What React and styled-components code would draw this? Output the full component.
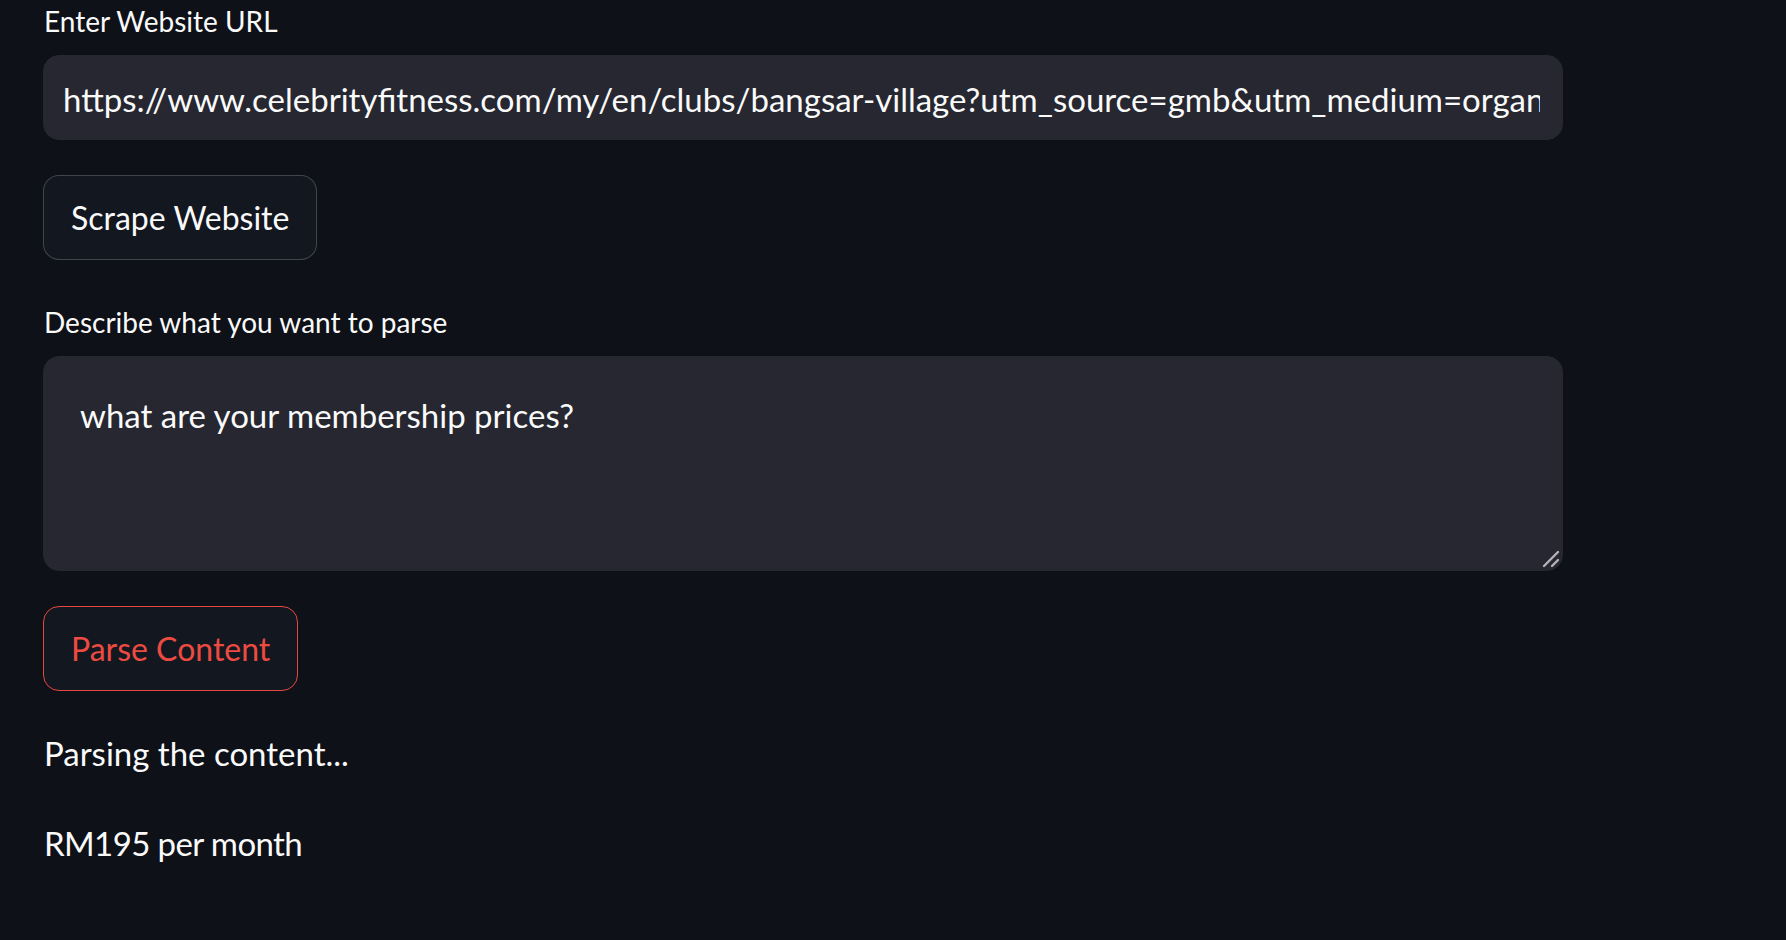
import React from "react";
import styled, { createGlobalStyle } from "styled-components";

const GlobalStyle = createGlobalStyle`
    html, body {
        margin: 0;
        padding: 0;
        background: #0e1117;
    }
    body {
        font-family: "Lato", "Noto Sans", sans-serif;
        color: #fafafa;
    }
    * {
        box-sizing: border-box;
    }
`;

const URL_VALUE =
    "https://www.celebrityfitness.com/my/en/clubs/bangsar-village?utm_source=gmb&utm_medium=organic&utm_campaign=local";

export default function App() {
    return (
        <Page>
            <GlobalStyle />
            <Main>
                <Label htmlFor="url">Enter Website URL</Label>
                <TextInput id="url" type="text" defaultValue={URL_VALUE} />
                <Button>Scrape Website</Button>
                <Label htmlFor="desc" $gap={42}>
                    Describe what you want to parse
                </Label>
                <AreaWrap>
                    <TextArea id="desc" defaultValue="what are your membership prices?" />
                    <ResizeHandle viewBox="0 0 20 20" aria-hidden="true">
                        <line x1="3" y1="17" x2="17" y2="3" />
                        <line x1="11" y1="17" x2="17" y2="11" />
                    </ResizeHandle>
                </AreaWrap>
                <Button $primary>Parse Content</Button>
                <Message $gap={36}>Parsing the content...</Message>
                <Message $gap={37} $tight>
                    RM195 per month
                </Message>
            </Main>
        </Page>
    );
}

const Page = styled.div`
    min-height: 940px;
    padding: 1px 0 0 43px;
`;

const Main = styled.div`
    width: 1520px;
    display: flex;
    flex-direction: column;
    align-items: flex-start;
`;

const Label = styled.label`
    display: block;
    font-size: 28px;
    line-height: 40px;
    margin-top: ${(p) => p.$gap || 0}px;
    margin-bottom: 14px;
    padding-left: 1px;
    color: #fafafa;
`;

const fieldBase = `
    width: 100%;
    background: #262730;
    border: 1px solid #262730;
    border-radius: 16px;
    color: #fafafa;
    font-family: "Lato", "Noto Sans", sans-serif;
    font-size: 33px;
    outline: none;
`;

const TextInput = styled.input`
    ${fieldBase}
    height: 85px;
    padding: 2px 22px 0 19px;
`;

const AreaWrap = styled.div`
    position: relative;
    width: 100%;
`;

const TextArea = styled.textarea`
    ${fieldBase}
    display: block;
    height: 215px;
    padding: 32px 36px;
    line-height: 1.6;
    resize: none;
`;

const ResizeHandle = styled.svg`
    position: absolute;
    right: 2px;
    bottom: 2px;
    width: 20px;
    height: 20px;
    pointer-events: none;
    line {
        stroke: #b4b4b8;
        stroke-width: 2.4;
        stroke-linecap: round;
    }
`;

const Button = styled.button`
    margin-top: 35px;
    height: 85px;
    padding: 0 27px;
    border-radius: 16px;
    background: #131720;
    border: 1px solid ${(p) => (p.$primary ? "#e5483f" : "rgba(250, 250, 250, 0.2)")};
    color: ${(p) => (p.$primary ? "#ec4b42" : "#fafafa")};
    font-family: "Lato", "Noto Sans", sans-serif;
    font-size: 32px;
    cursor: pointer;
`;

const Message = styled.p`
    margin: ${(p) => p.$gap}px 0 0 1px;
    font-size: 33px;
    letter-spacing: ${(p) => (p.$tight ? "-0.6px" : "0")};
    line-height: 53px;
    color: #fafafa;
`;
